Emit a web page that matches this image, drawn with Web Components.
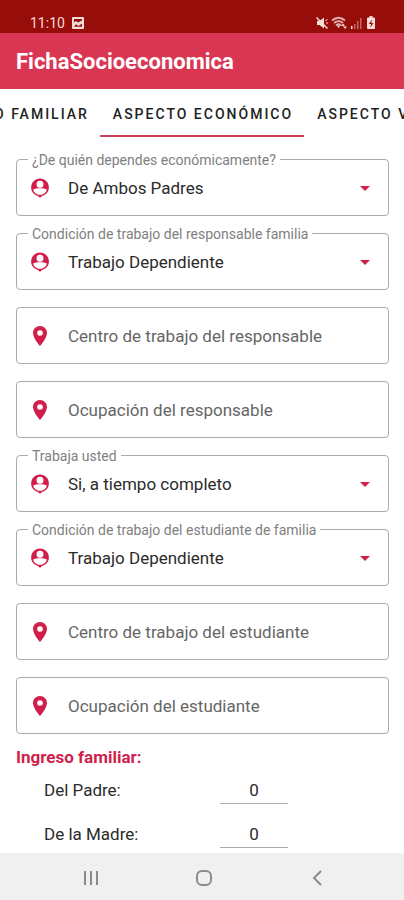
<!DOCTYPE html>
<html lang="es">
<head>
<meta charset="utf-8">
<meta name="viewport" content="width=device-width, initial-scale=1">
<title>FichaSocioeconomica</title>
<style>
  body {
    margin: 0;
    background: white;
    color: #2b2b2b;
    font-family: Roboto, "Liberation Sans", sans-serif;
    --cherry: #d93654;
    --crimson: #cf1f4a;
    --dark-red: #960d0a;
    --line: #ababab;
    --hint: #666666;
  }
</style>
</head>
<body>
<ficha-app></ficha-app>

<script>
(function () {
  function define (name, html, setup) {
    let template = document.createElement('template')
    template.innerHTML = html
    window.customElements.define(name, class extends HTMLElement {
      constructor () {
        super()
        this.attachShadow({ mode: 'open' })
          .appendChild(template.content.cloneNode(true))
      }
      connectedCallback () {
        setup && setup(this, this.shadowRoot)
      }
    })
  }

  const ICONS = {
    person: `<path fill-rule="evenodd" d="M12 2.6a8.8 8.8 0 0 0-3.3 17l2 .8L12 22l1.3-1.6 2-.8A8.8 8.8 0 0 0 12 2.6zM12 4.700a3.500 3.500 0 1 1 0 7 3.500 3.500 0 0 1 0-7zM5.200 13.500c1.600-.8 4-1.200 6.800-1.200s5.200.4 6.800 1.200c-.6 3.200-3.400 5.300-6.800 5.300s-6.200-2.100-6.800-5.300z"/>`,
    place: `<path d="M12 2C8.130 2 5 5.130 5 9c0 5.250 7 13 7 13s7-7.750 7-13c0-3.870-3.130-7-7-7zm0 9.800a2.800 2.800 0 1 1 0-5.600 2.800 2.800 0 0 1 0 5.600z"/>`
  }

  define('status-bar', `
    <style>
      :host {
        align-items: flex-end;
        background: var(--dark-red);
        box-sizing: border-box;
        color: #f6dcd8;
        display: flex;
        height: 33px;
        justify-content: space-between;
        padding: 0 27px 2px 30px;
      }
      .group {
        align-items: center;
        display: flex;
        gap: 6px;
        height: 16px;
      }
      .icons {
        gap: 2px;
      }
      time {
        font-size: 14px;
        line-height: 16px;
      }
      svg {
        display: block;
        fill: currentColor;
      }
    </style>
    <div class="group">
      <time>11:10</time>
      <svg width="14" height="14" viewBox="0 0 14 14"><path fill-rule="evenodd" d="M2 1h10q1 0 1 1v10q0 1-1 1H2q-1 0-1-1V2q0-1 1-1zm1 2v3.500l2-1.500 2 1.600L11 4.500V3zM3 10.800h8V7.500L7.500 10 5 8.300z"/></svg>
    </div>
    <div class="group icons">
      <svg width="14" height="14" viewBox="0 0 14 14"><path d="M2 5h2.500L9 1.500v11L4.500 9H2z"/><path d="M1.500 1.500l11 11" stroke="#f6dcd8" stroke-width="1.500"/><path d="M10.500 4.500l2-1M11 7h2" stroke="#f6dcd8"/></svg>
      <svg width="17" height="14" viewBox="0 0 17 14"><path d="M1 4.500q6.500-5.500 13 0M3 7q4.500-3.700 9 0M5 9.300q2.500-2 5 0" fill="none" stroke="#f6dcd8" stroke-width="1.800" opacity=".8"/><path d="M5.700 9.500h3.600L7.500 12zM10 10l2-2.500L14 10zM12 10.500h4L14 13z"/></svg>
      <svg width="13" height="14" viewBox="0 0 13 14"><path d="M1 10h1.500v3H1z"/><path d="M4 8h1.500v5H4zM7 5h1.500v8H7zM10 2h1.500v11H10z" opacity=".45"/></svg>
      <svg width="12" height="14" viewBox="0 0 12 14"><path fill-rule="evenodd" d="M4.500 0h3v1.500H9q1 0 1 1V12q0 1-1 1H3q-1 0-1-1V2.500q0-1 1-1h1.500zM7 3.500L3.800 8H6l-.5 3.500L8.500 7H6.300z"/></svg>
    </div>
  `)

  define('app-bar', `
    <style>
      :host {
        align-items: center;
        background: var(--cherry);
        box-sizing: border-box;
        color: white;
        display: flex;
        height: 56px;
        padding: 2px 16px 0;
      }
      h1 {
        font-size: 22px;
        font-weight: 700;
        line-height: 28px;
        margin: 0;
      }
    </style>
    <h1><slot></slot></h1>
  `)

  define('tab-strip', `
    <style>
      :host {
        display: grid;
        grid-template-columns: minmax(0, 1fr) auto minmax(0, 1fr);
        height: 48px;
      }
      button {
        background: none;
        border: 0;
        border-bottom: 2px solid transparent;
        color: #222222;
        display: flex;
        align-items: center;
        font: 500 14px/20px Roboto, "Liberation Sans", sans-serif;
        letter-spacing: 2px;
        overflow: hidden;
        padding: 4px 11px 0 13px;
        white-space: nowrap;
      }
      .previous {
        justify-content: flex-end;
      }
      [aria-selected="true"] {
        border-color: #cc3d5c;
      }
    </style>
    <button class="previous" role="tab" aria-selected="false">O FAMILIAR</button>
    <button role="tab" aria-selected="true">ASPECTO ECONÓMICO</button>
    <button role="tab" aria-selected="false">ASPECTO V</button>
  `)

  const FIELD_STYLE = `
    :host {
      align-items: center;
      border: 1px solid var(--line);
      border-radius: 4px;
      box-sizing: border-box;
      display: flex;
      height: 57px;
      padding: 0 11px;
      position: relative;
    }
    svg {
      display: block;
      fill: var(--crimson);
      flex: none;
      height: 24px;
      width: 24px;
    }
    select,
    input {
      -webkit-appearance: none;
      appearance: none;
      background: none;
      border: 0;
      color: inherit;
      flex: 1;
      font: 400 17px/24px Roboto, "Liberation Sans", sans-serif;
      min-width: 0;
      outline: none;
      padding: 0 0 0 16px;
    }
  `

  define('select-field', `
    <style>
      ${FIELD_STYLE}
      /* The label sits in a notch of the outline. */
      label {
        background: white;
        color: #808080;
        font-size: 14px;
        left: 11px;
        line-height: 16px;
        padding: 0 4px;
        position: absolute;
        top: -8px;
        white-space: nowrap;
      }
    </style>
    <label for="field"></label>
    <svg viewBox="0 0 24 24">${ICONS.person}</svg>
    <select id="field"><option></option></select>
    <svg viewBox="0 0 24 24"><path d="M7 10l5 5 5-5z"/></svg>
  `, (host, root) => {
    root.querySelector('label').textContent = host.getAttribute('label')
    root.querySelector('option').textContent = host.getAttribute('value')
  })

  define('text-field', `
    <style>
      ${FIELD_STYLE}
      input::placeholder {
        color: var(--hint);
        opacity: 1;
      }
    </style>
    <svg viewBox="0 0 24 24">${ICONS.place}</svg>
    <input type="text">
  `, (host, root) => {
    let $input = root.querySelector('input')
    $input.placeholder = host.getAttribute('label')
    $input.setAttribute('aria-label', host.getAttribute('label'))
  })

  define('income-row', `
    <style>
      :host {
        align-items: center;
        display: grid;
        font-size: 17px;
        grid-template-columns: 176px 68px;
        height: 28px;
        line-height: 24px;
        padding-left: 28px;
      }
      input {
        background: none;
        border: 0;
        border-bottom: 1px solid var(--line);
        box-sizing: border-box;
        color: inherit;
        font: inherit;
        height: 28px;
        outline: none;
        padding: 0;
        text-align: center;
        width: 100%;
      }
    </style>
    <label for="amount"><slot></slot></label>
    <input id="amount" type="text" inputmode="numeric" value="0">
  `)

  define('nav-bar', `
    <style>
      :host {
        background: #f0f0f0;
        box-sizing: border-box;
        display: grid;
        flex: none;
        grid-template-columns: repeat(3, 1fr);
        height: 47px;
        padding: 2px 29px 0 34px;
      }
      button {
        align-items: center;
        background: none;
        border: 0;
        display: flex;
        justify-content: center;
        padding: 0;
      }
      svg {
        fill: none;
        height: 20px;
        stroke: #8b8b8b;
        stroke-width: 2;
        width: 20px;
      }
    </style>
    <button aria-label="Recientes"><svg viewBox="0 0 20 20"><path d="M4 3v14M10 3v14M16 3v14"/></svg></button>
    <button aria-label="Inicio"><svg viewBox="0 0 20 20"><rect x="3" y="3" width="14" height="14" rx="5"/></svg></button>
    <button aria-label="Atrás"><svg viewBox="0 0 20 20"><path d="M13 3l-7 7 7 7"/></svg></button>
  `)

  define('ficha-app', `
    <style>
      :host {
        display: flex;
        flex-direction: column;
        height: 100vh;
      }
      status-bar, app-bar, tab-strip {
        flex: none;
      }
      main {
        flex: 1;
        min-height: 0;
        overflow: hidden;
        padding: 22px 15px 0 16px;
      }
      .fields {
        display: grid;
        gap: 17px;
      }
      h2 {
        color: var(--crimson);
        font-size: 17px;
        font-weight: 700;
        line-height: 24px;
        margin: 11px 0 7px;
      }
      .incomes {
        display: grid;
        gap: 16px;
      }
    </style>
    <status-bar></status-bar>
    <app-bar>FichaSocioeconomica</app-bar>
    <tab-strip role="tablist"></tab-strip>
    <main>
      <div class="fields">
        <select-field label="¿De quién dependes económicamente?" value="De Ambos Padres"></select-field>
        <select-field label="Condición de trabajo del responsable familia" value="Trabajo Dependiente"></select-field>
        <text-field label="Centro de trabajo del responsable"></text-field>
        <text-field label="Ocupación del responsable"></text-field>
        <select-field label="Trabaja usted" value="Si, a tiempo completo"></select-field>
        <select-field label="Condición de trabajo del estudiante de familia" value="Trabajo Dependiente"></select-field>
        <text-field label="Centro de trabajo del estudiante"></text-field>
        <text-field label="Ocupación del estudiante"></text-field>
      </div>
      <h2>Ingreso familiar:</h2>
      <div class="incomes">
        <income-row>Del Padre:</income-row>
        <income-row>De la Madre:</income-row>
      </div>
    </main>
    <nav-bar></nav-bar>
  `)
})()
</script>
</body>
</html>
